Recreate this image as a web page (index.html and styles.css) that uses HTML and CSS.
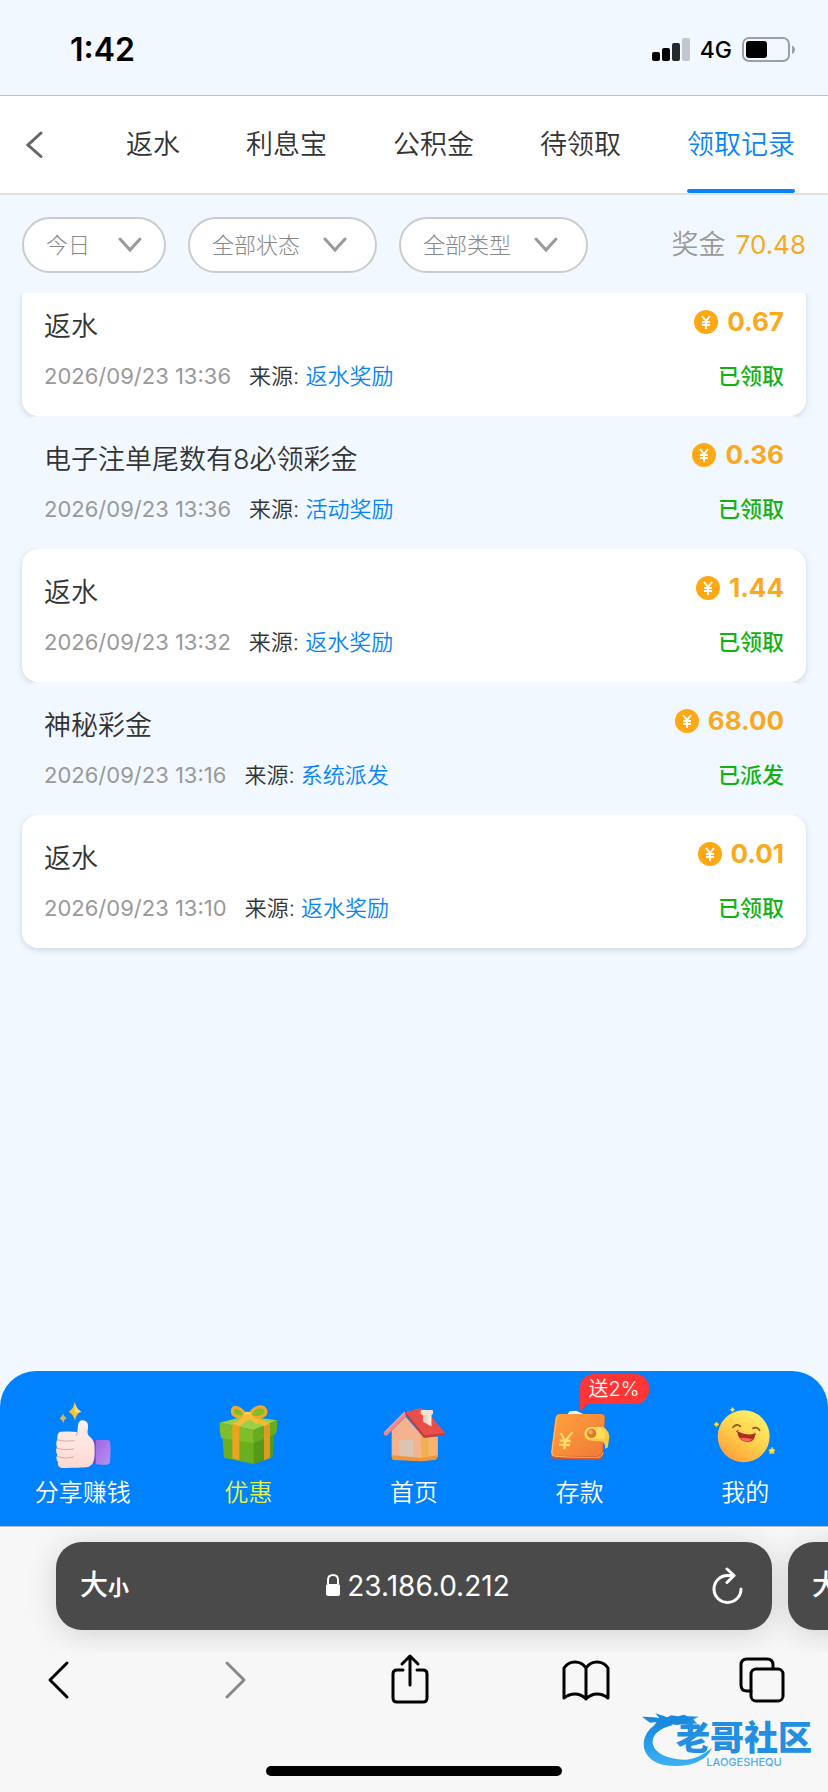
FILE: index.html
```html
<!DOCTYPE html>
<html lang="zh-CN">
  <head>
    <meta charset="UTF-8" />
    <title>领取记录</title>
    <meta
      name="viewport"
      content="width=device-width, initial-scale=1, viewport-fit=cover"
    />
    <link rel="stylesheet" href="styles.css">
  </head>
  <body>
    <div class="status">
      <time class="status__time">1:42</time>
      <div class="status__icons">
        <svg width="38" height="24" viewBox="0 0 38 24" aria-hidden="true">
          <rect x="0" y="14" width="8" height="9" rx="2" />
          <rect x="10" y="10" width="8" height="13" rx="2" />
          <rect x="20" y="5" width="8" height="18" rx="2" fill="#24292d" />
          <rect x="30" y="0" width="8" height="23" rx="2" fill="#c0c7ce" />
        </svg>
        <span class="status__network">4G</span>
        <svg width="54" height="26" viewBox="0 0 54 26" aria-hidden="true">
          <rect x="1" y="1" width="46" height="23" rx="6" fill="none" stroke="#9a9fa8" stroke-width="2" />
          <rect x="4" y="4" width="21" height="17" rx="3" />
          <path d="M50 8.500c4 1.500 4 7 0 8.500z" fill="#9a9fa8" />
        </svg>
      </div>
    </div>

    <header class="header">
      <button class="header__back" type="button" aria-label="返回">
        <svg width="18" height="28" viewBox="0 0 18 28">
          <path d="M15 2 2 14l13 11.500" fill="none" stroke="#666" stroke-width="3" stroke-linecap="round" />
        </svg>
      </button>
      <nav class="tabs">
        <a class="tabs__item" href="#">返水</a>
        <a class="tabs__item" href="#">利息宝</a>
        <a class="tabs__item" href="#">公积金</a>
        <a class="tabs__item" href="#">待领取</a>
        <a class="tabs__item tabs__item--active" href="#">领取记录</a>
      </nav>
    </header>

    <main class="main">
      <div class="filters">
        <label class="filter filter--day">
          <select class="filter__select" aria-label="日期"><option>今日</option></select>
          <svg width="24" height="16" viewBox="0 0 24 16"><path d="m2 2 10 11L22 2" /></svg>
        </label>
        <label class="filter">
          <select class="filter__select" aria-label="状态"><option>全部状态</option></select>
          <svg width="24" height="16" viewBox="0 0 24 16"><path d="m2 2 10 11L22 2" /></svg>
        </label>
        <label class="filter">
          <select class="filter__select" aria-label="类型"><option>全部类型</option></select>
          <svg width="24" height="16" viewBox="0 0 24 16"><path d="m2 2 10 11L22 2" /></svg>
        </label>
        <div class="total">奖金 <span class="total__value">70.48</span></div>
      </div>

      <svg class="defs" aria-hidden="true">
        <symbol id="coin" viewBox="0 0 24 24">
          <circle cx="12" cy="12" r="12" fill="#ffa814" />
          <path d="m8 6 4 5 4-5M12 11v8M8 12h8M8 15h8" fill="none" stroke="#fff" stroke-width="2" />
        </symbol>
      </svg>

      <ul class="records">
        <li class="record">
          <div class="record__row">
            <h2 class="record__title">返水</h2>
            <span class="record__amount"><svg class="coin"><use href="#coin" /></svg>0.67</span>
          </div>
          <div class="record__row">
            <p class="record__meta"><time>2026/09/23 13:36</time><span class="record__source">来源: <a href="#">返水奖励</a></span></p>
            <strong class="record__state">已领取</strong>
          </div>
        </li>
        <li class="record">
          <div class="record__row">
            <h2 class="record__title">电子注单尾数有8必领彩金</h2>
            <span class="record__amount"><svg class="coin"><use href="#coin" /></svg>0.36</span>
          </div>
          <div class="record__row">
            <p class="record__meta"><time>2026/09/23 13:36</time><span class="record__source">来源: <a href="#">活动奖励</a></span></p>
            <strong class="record__state">已领取</strong>
          </div>
        </li>
        <li class="record">
          <div class="record__row">
            <h2 class="record__title">返水</h2>
            <span class="record__amount"><svg class="coin"><use href="#coin" /></svg>1.44</span>
          </div>
          <div class="record__row">
            <p class="record__meta"><time>2026/09/23 13:32</time><span class="record__source">来源: <a href="#">返水奖励</a></span></p>
            <strong class="record__state">已领取</strong>
          </div>
        </li>
        <li class="record">
          <div class="record__row">
            <h2 class="record__title">神秘彩金</h2>
            <span class="record__amount"><svg class="coin"><use href="#coin" /></svg>68.00</span>
          </div>
          <div class="record__row">
            <p class="record__meta"><time>2026/09/23 13:16</time><span class="record__source">来源: <a href="#">系统派发</a></span></p>
            <strong class="record__state">已派发</strong>
          </div>
        </li>
        <li class="record">
          <div class="record__row">
            <h2 class="record__title">返水</h2>
            <span class="record__amount"><svg class="coin"><use href="#coin" /></svg>0.01</span>
          </div>
          <div class="record__row">
            <p class="record__meta"><time>2026/09/23 13:10</time><span class="record__source">来源: <a href="#">返水奖励</a></span></p>
            <strong class="record__state">已领取</strong>
          </div>
        </li>
      </ul>
    </main>

    <nav class="dock">
      <a class="dock__item" href="#">
        <svg class="dock__icon" viewBox="143 120 210 210">
          <defs>
            <linearGradient id="skin" x1="0" y1="0" x2="0" y2="1"><stop offset="0" stop-color="#fff0ec" /><stop offset="1" stop-color="#fbd9d3" /></linearGradient>
            <linearGradient id="cuff" x1="0" y1="0" x2="1" y2="1"><stop offset="0" stop-color="#9a63e0" /><stop offset="1" stop-color="#b892f2" /></linearGradient>
          </defs>
          <path d="M223 126q4 22 20 29-16 6-19 27-5-20-19-27 15-8 18-29z" fill="#f2c33c" />
          <path d="M223 126q4 22 20 29l-19 2z" fill="#ffe27a" />
          <path d="M188 160q2 11 11 15-9 4-10 15-3-11-11-15 9-5 10-15z" fill="#d9b95c" />
          <path d="M277 240h44q8 0 9 8 2 28-1 58-1 7-9 8-22 2-43-4z" fill="url(#cuff)" />
          <path d="M277 240h9v73l-9-3z" fill="#7442bd" />
          <path d="M231 217c2-18 1-35 14-36 15-1 20 11 18 22-2 12-3 20 6 28 13 11 14 20 14 42 0 26-3 42-18 47-17 4-50 2-76 4-13 0-18-7-16-18-5-5-7-14-2-22-5-7-5-16-1-22-4-9-2-18 1-24-1-18 4-23 14-23 16 0 27-1 46 2z" fill="url(#skin)" />
          <path d="M171 240q20 6 50 2M170 265q23 8 50 2M172 290q22 9 48 1M231 217l-4 10" fill="none" stroke="#dfaaa5" stroke-width="3" stroke-linecap="round" />
        </svg>
        <span class="dock__label">分享赚钱</span>
      </a>
      <a class="dock__item dock__item--active" href="#">
        <svg class="dock__icon" viewBox="640 120 210 210">
          <path d="m668 230 94 14 62-24-6 72-57 20-88-19z" fill="#69af20" />
          <path d="m762 240 62-20-6 72-56 20z" fill="#559917" />
          <path d="m660 188 78-20 94 13-70 29z" fill="#9bd044" />
          <path d="m660 188 102 22v40l-98-16q-5-20-4-46z" fill="#7fbe2a" />
          <path d="m762 210 70-29q2 20-3 40l-67 29z" fill="#67ab20" />
          <path d="m698 192 21 5v103l-21-5z" fill="#e9a521" />
          <path d="m698 192 40-22 18 3-37 24z" fill="#f7bb36" />
          <path d="m752 177 16-5 43 19-18 8z" fill="#f5b92e" />
          <path d="m793 199 18-8v103l-18 7z" fill="#e09a22" />
          <path d="M740 168c-20-33-43-31-42-14 0 17 25 20 42 14zM748 168c15-34 48-34 51-15 2 17-27 25-51 15z" fill="#7fbe2a" stroke="#f2a92b" stroke-width="9" />
          <path d="m738 166-18 25M749 168l22 18" stroke="#f7bd39" stroke-width="11" stroke-linecap="round" />
          <rect x="729" y="155" width="29" height="26" rx="10" fill="#f7bb36" />
          <path d="M736 161q9-4 15 1" fill="none" stroke="#ffe27a" stroke-width="4" />
        </svg>
        <span class="dock__label">优惠</span>
      </a>
      <a class="dock__item" href="#">
        <svg class="dock__icon" viewBox="237 120 210 210">
          <path d="m275 212 42-42 52 60v73l-88-5q-6-1-6-8z" fill="#f5b28e" />
          <path d="M362 230h51v58q0 8-6 10l-42 5z" fill="#f3ae50" />
          <path d="M385 230h28v58l-8 8-20 2z" fill="#f7b36f" />
          <rect x="298" y="240" width="41" height="50" fill="#dac5b2" />
          <path d="M276 286v10l4 4 85 4 42-5 6-9v-5l-49 9z" fill="#ee963a" />
          <path d="m316 157 43-12 17 3 59 71-3 6-60 9z" fill="#e94f4a" />
          <path d="m314 160 58 74 60-9 3-6-61 7-58-71z" fill="#c93b43" />
          <path d="m252 218 62-62 4 12-58 59-8-2z" fill="#f4868b" />
          <path d="m252 218 62-62" stroke="#ffc3c2" stroke-width="3" />
          <path d="M369 161h25v38l-25-14z" fill="#e7d4be" />
          <path d="M383 161h11v38l-11-6z" fill="#f5e7d5" />
          <rect x="362" y="150" width="37" height="14" rx="4" fill="#f3e3d4" />
        </svg>
        <span class="dock__label">首页</span>
      </a>
      <a class="dock__item" href="#">
        <span class="dock__badge">送2%</span>
        <svg class="dock__icon" viewBox="44 120 210 210">
          <defs>
            <linearGradient id="leather" x1="0" y1="0" x2="1" y2="1"><stop offset="0" stop-color="#ffa23e" /><stop offset="1" stop-color="#f07a36" /></linearGradient>
          </defs>
          <path d="m110 164 8-10 20-2 27 13z" fill="#eef4ff" />
          <path d="M86 164h126q12 0 11 13l-4 105q-1 17-18 17l-128-3q-13-1-12-12l13-106q2-14 12-14z" fill="#d95625" />
          <path d="M88 162h124q12 0 11 12l-7 98q-2 16-17 16l-124-1q-14-1-13-12l14-101q2-12 12-12z" fill="url(#leather)" />
          <path d="M83 166q-4 2-5 9L65 276q-1 8 5 10" fill="none" stroke="#ffc06a" stroke-width="3" />
          <path d="M66 286q5 6 134 6 14 0 18-14" fill="none" stroke="#ffbd79" stroke-width="3" />
          <path d="M184 201h36q16 12 17 30l-5 32-8 3q2-20-12-22l-30-2q-20-2-20-20 1-20 22-21z" fill="#f9cc48" />
          <path d="M184 201h30q10 8 11 20 0 14-10 16l-33-1q-18-3-18-16 1-18 20-19z" fill="#ffdc5d" />
          <circle cx="184" cy="220" r="14" fill="#da792e" />
          <circle cx="181" cy="216" r="7" fill="#f6a55c" />
          <path d="m91 219 14 24 21-26M104 243l-2 25M88 242l33 1M86 254l33 1" fill="none" stroke="#ffdc68" stroke-width="7" />
        </svg>
        <span class="dock__label">存款</span>
      </a>
      <a class="dock__item" href="#">
        <svg class="dock__icon" viewBox="541 120 210 210">
          <defs>
            <linearGradient id="face" x1=".85" y1="0" x2=".2" y2="1"><stop offset="0" stop-color="#fff56c" /><stop offset=".5" stop-color="#ffd24d" /><stop offset="1" stop-color="#ff9c35" /></linearGradient>
          </defs>
          <circle cx="642" cy="229" r="78" fill="url(#face)" />
          <path d="M610 202q11-13 22-3M670 205q12-7 20 6" fill="none" stroke="#96501d" stroke-width="5" stroke-linecap="round" />
          <path d="M622 214q28 14 54 7 2 24-24 25-25 0-30-32z" fill="#a92e1f" />
          <path d="M630 234q20-3 39 4-20 15-39-4z" fill="#ff675c" />
          <path d="M620 216q0-5 7-4M672 219q7 0 6 6" fill="none" stroke="#a85018" stroke-width="3" />
          <path d="m608 142 3 4 4 3-4 3-3 4-3-4-3-3 4-3zM560 186l3 4 5 3-5 3-3 5-3-5-4-3 4-3zM727 261l3 6 6 3-4 5 1 6-6-2-7 2 1-6-4-5 7-2z" fill="#ffe23f" stroke="#eed03d" stroke-width="2" />
        </svg>
        <span class="dock__label">我的</span>
      </a>
    </nav>

    <footer class="browser">
      <div class="address">
        <div class="address__bar">
          <button class="address__size" type="button">大<small>小</small></button>
          <span class="address__url">
            <svg width="16" height="24" viewBox="0 0 16 24" aria-hidden="true">
              <path d="M3 10V6q0-5 5-5t5 5v4" fill="none" stroke="#fff" stroke-width="2" />
              <rect x="1" y="10" width="14" height="12" rx="2" fill="#fff" />
            </svg>
            23.186.0.212
          </span>
          <button class="address__reload" type="button" aria-label="刷新">
            <svg width="32" height="38" viewBox="0 0 32 38">
              <path d="M29 22A13.500 13.500 0 1 1 15.500 8.500H22M15 2l7 6.500-7 7" fill="none" stroke="#fff" stroke-width="3" stroke-linecap="round" stroke-linejoin="round" />
            </svg>
          </button>
        </div>
        <div class="address__bar">
          <button class="address__size" type="button">大<small>小</small></button>
        </div>
      </div>

      <div class="toolbar">
        <button class="toolbar__button" type="button" aria-label="后退">
          <svg width="56" height="56" viewBox="0 0 56 56"><path d="M37 11 20 28l17 17" /></svg>
        </button>
        <button class="toolbar__button toolbar__button--off" type="button" aria-label="前进" disabled>
          <svg width="56" height="56" viewBox="0 0 56 56"><path d="m21 11 17 17-17 17" /></svg>
        </button>
        <button class="toolbar__button" type="button" aria-label="分享">
          <svg width="56" height="56" viewBox="0 0 56 56"><path d="M21 18h-6q-4 0-4 4v24q0 4 4 4h26q4 0 4-4V22q0-4-4-4h-6M28 33V5M20 12l8-8 8 8" /></svg>
        </button>
        <button class="toolbar__button" type="button" aria-label="书签">
          <svg width="56" height="56" viewBox="0 0 56 56"><path d="M28 16q-4-6-11-6t-11 6v30q5-4 11-4t11 5q5-5 11-5t11 4V16q-4-6-11-6t-11 6v31" /></svg>
        </button>
        <button class="toolbar__button" type="button" aria-label="标签页">
          <svg width="56" height="56" viewBox="0 0 56 56"><path d="M17 39h-4q-6 0-6-6V13q0-6 6-6h20q6 0 6 6v3" /><rect x="17" y="17" width="32" height="32" rx="5" /></svg>
        </button>
      </div>
      <div class="browser__home"></div>

      <div class="brand">
        <svg class="brand__swirl" width="72" height="56" viewBox="0 0 216 168" aria-hidden="true">
          <defs>
            <linearGradient id="swirl" x1="0" y1="0" x2="0" y2="1"><stop offset="0" stop-color="#1685dc" /><stop offset="1" stop-color="#3bb2f2" /></linearGradient>
          </defs>
          <path d="M76 24C-22 44-24 166 105 162c58-2 93-24 105-55-36 30-70 40-101 35C10 130 8 58 92 40z" fill="url(#swirl)" />
          <path d="m0 14 34 2 18 2-12-14 36 12 12-6 20 3 18-5 10 5 34 1-16 8 4 6 8 8-26-4 4 7-22-3-16 3-30-4-26 8-14-3 8-10-20 2-10-7z" fill="#1a89df" />
        </svg>
        <div class="brand__text">
          <span class="brand__name">老哥社区</span>
          <span class="brand__latin">LAOGESHEQU</span>
        </div>
      </div>
    </footer>
  </body>
</html>
```
FILE: styles.css
```css
:root {
  --color-bg: #f1f8ff;
  --color-text: #333;
  --color-muted: #999;
  --color-blue: #0785f8;
  --color-dock: #0082ff;
  --color-gold: #faa91c;
  --color-green: #13b213;
}

*,
*::before,
*::after {
  box-sizing: border-box;
}

body {
  margin: 0;
  min-height: 100vh;
  display: flex;
  flex-direction: column;
  font-family: Inter, "Noto Sans CJK SC", sans-serif;
  font-size: 22px;
  font-weight: 350;
  line-height: 32px;
  color: var(--color-text);
  background-color: var(--color-bg);
}

a {
  color: inherit;
  text-decoration: none;
}

button {
  padding: 0;
  border: 0;
  background: none;
  font: inherit;
  color: inherit;
}

svg {
  display: block;
  flex: none;
}

.defs {
  width: 0;
  height: 0;
  position: absolute;
}

/* Status bar */
.status {
  height: 96px;
  padding: 4px 32px 0 70px;
  display: flex;
  justify-content: space-between;
  align-items: center;
  border-bottom: 1px solid #b7c0ca;
  color: #000;
}

.status__time {
  font-size: 32px;
  font-weight: 600;
}

.status__icons {
  display: flex;
  align-items: center;
  gap: 10px;
}

.status__network {
  font-size: 23px;
  font-weight: 500;
}

/* Header */
.header {
  height: 99px;
  padding: 0 33px 0 26px;
  display: flex;
  justify-content: space-between;
  background-color: #fff;
  border-bottom: 2px solid #dfe1e4;
}

.tabs {
  display: flex;
  gap: 66px;
}

.tabs__item {
  position: relative;
  display: flex;
  align-items: center;
  font-size: 27px;
}

.tabs__item--active {
  color: var(--color-blue);
}

.tabs__item--active::after {
  content: "";
  position: absolute;
  left: 0;
  right: 0;
  bottom: 0;
  height: 4px;
  border-radius: 2px;
  background-color: var(--color-blue);
}

/* Filters */
.main {
  flex: 1;
}

.filters {
  padding: 22px 22px 20px;
  display: flex;
  align-items: center;
  gap: 22px;
}

.filter {
  height: 56px;
  padding: 0 28px 0 22px;
  display: flex;
  align-items: center;
  gap: 22px;
  border: 2px solid #c8cccf;
  border-radius: 28px;
  background-color: #fff;
}

.filter--day {
  padding-right: 22px;
  gap: 27px;
}

.filter path {
  fill: none;
  stroke: var(--color-muted);
  stroke-width: 3;
  stroke-linecap: round;
}

.filter__select {
  appearance: none;
  padding: 0;
  border: 0;
  background: none;
  font: inherit;
  font-weight: 300;
  color: #888;
}

.total {
  margin-left: auto;
  display: flex;
  gap: 10px;
  font-size: 27px;
  color: var(--color-muted);
}

.total__value {
  font-size: 26px;
  font-weight: 400;
  color: var(--color-gold);
}

/* Records */
.records {
  margin: 0;
  padding: 0 22px 20px;
  display: flex;
  flex-direction: column;
  list-style: none;
  overflow: hidden;
}

.record {
  height: 133px;
  padding: 20px 22px;
  display: flex;
  flex-direction: column;
  gap: 2px;
  border-radius: 16px;
}

/* list is scrolled a little under the filters */
.record:first-child {
  margin-top: -10px;
}

.record:nth-child(odd) {
  background-color: #fff;
  box-shadow: 0 2px 6px rgba(60, 80, 110, 0.2);
}

/* even rows cover the shadow of the card above */
.record:nth-child(even) {
  position: relative;
  background-color: var(--color-bg);
}

.record__row {
  display: flex;
  justify-content: space-between;
  align-items: center;
}

.record__title {
  margin: 0;
  font-size: 27px;
  line-height: 48px;
  font-weight: inherit;
}

.record__amount {
  padding-bottom: 10px;
  display: flex;
  align-items: center;
  gap: 9px;
  font-size: 26px;
  font-weight: 700;
  color: var(--color-gold);
}

.coin {
  width: 24px;
  height: 24px;
}

.record__meta {
  margin: 0;
  line-height: 46px;
}

.record__meta time {
  font-weight: 400;
  color: var(--color-muted);
}

.record__source {
  margin-left: 18px;
}

.record__source a {
  color: var(--color-blue);
}

.record__state {
  font-weight: 500;
  color: var(--color-green);
}

/* Bottom navigation */
.dock {
  height: 155px;
  padding-top: 29px;
  display: grid;
  grid-template-columns: repeat(5, 1fr);
  border-radius: 36px 36px 0 0;
  background-color: var(--color-dock);
  color: #fff;
}

.dock__item {
  position: relative;
  display: flex;
  flex-direction: column;
  align-items: center;
  gap: 7px;
}

.dock__item--active {
  color: #e6f53c;
}

.dock__icon {
  width: 70px;
  height: 70px;
}

.dock__label {
  font-size: 24px;
}

.dock__badge {
  position: absolute;
  top: -26px;
  left: 50%;
  z-index: 1;
  height: 30px;
  padding: 0 9px;
  border-radius: 14px 14px 14px 0;
  background-color: #ff3536;
  font-size: 20px;
  line-height: 30px;
}

.dock__badge::after {
  content: "";
  position: absolute;
  top: 100%;
  left: 0;
  border-top: 7px solid #ff3536;
  border-right: 8px solid transparent;
}

/* Browser controls */
.browser {
  position: relative;
  padding-bottom: 16px;
  border-top: 1px solid #b4bcc4;
  background-color: #f7f7f7;
}

.address {
  padding: 15px 0 22px 56px;
  display: flex;
  gap: 16px;
  overflow: hidden;
}

.address__bar {
  flex: none;
  width: calc(100% - 56px);
  height: 88px;
  padding: 0 28px 0 24px;
  display: flex;
  justify-content: space-between;
  align-items: center;
  border-radius: 26px;
  background-color: #4a4a4a;
  box-shadow: 0 4px 30px rgba(0, 0, 0, 0.15);
  color: #fff;
}

.address__size {
  font-size: 28px;
  font-weight: 500;
}

.address__size small {
  font-size: 21px;
  font-weight: 700;
}

.address__reload {
  padding-left: 6px;
}

.address__url {
  display: flex;
  align-items: center;
  gap: 6px;
  font-size: 28px;
  font-weight: 400;
}

.toolbar {
  padding: 0 38px 0 30px;
  display: flex;
  justify-content: space-between;
}

.toolbar__button svg {
  fill: none;
  stroke: #000;
  stroke-width: 3;
  stroke-linecap: round;
  stroke-linejoin: round;
}

.toolbar__button--off svg {
  stroke: #888;
}

.browser__home {
  width: 296px;
  height: 10px;
  margin: 58px auto 0;
  border-radius: 5px;
  background-color: #000;
}

/* Site mark over the browser controls */
.brand {
  position: absolute;
  right: 16px;
  bottom: 24px;
  display: flex;
  align-items: flex-end;
  color: #228fe3;
}

.brand__swirl {
  margin-right: -38px;
}

.brand__text {
  display: flex;
  flex-direction: column;
  align-items: center;
}

.brand__name {
  font-size: 34px;
  line-height: 36px;
  font-weight: 900;
}

.brand__latin {
  font-size: 11px;
  line-height: 12px;
  font-weight: 500;
  color: #4aaeed;
}
```
